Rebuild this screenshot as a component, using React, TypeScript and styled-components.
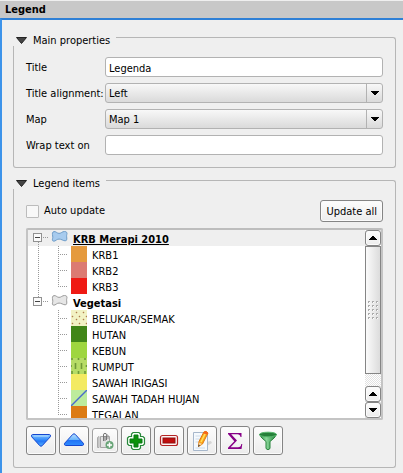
import React, { useState } from "react";
import styled, { createGlobalStyle, css } from "styled-components";

const GlobalStyle = createGlobalStyle`
  *, *::before, *::after { box-sizing: border-box; }
  body { margin: 0; background: #efefef; }
  body, button, input, select {
    font-family: "DejaVu Sans Condensed", "Noto Sans", sans-serif;
    font-size: 11px;
    line-height: 16px;
    color: #000;
  }
`;

const raised = css`
  border: 1px solid #858585;
  border-radius: 3px;
  background: linear-gradient(#fdfdfd, #ececec);
  box-shadow: inset 0 0 0 1px #fbfbfb;
`;

const Dock = styled.div`
  display: flex;
  flex-direction: column;
  min-height: 100vh;
  padding-top: 1px;
`;

const DockTitle = styled.h1`
  margin: 0;
  height: 17px;
  padding-left: 5px;
  background: #c8c8c8;
  font-size: 11px;
  line-height: 18px;
`;

const Panel = styled.main`
  flex: 1;
  display: flex;
  flex-direction: column;
  gap: 12px;
  padding: 17px 7px 5px 11px;
  border: solid #3c93ea;
  border-width: 2px 0 0 2px;
  border-top-color: #2f80d6;
`;

const GroupHeader = styled.div`
  display: flex;
  align-items: center;
  height: 9px;
`;

const GroupToggle = styled.button`
  display: flex;
  align-items: center;
  gap: 6px;
  padding: 0 6px 2px 3px;
  border: 0;
  background: none;
  white-space: nowrap;
`;

const GroupLine = styled.span`
  flex: 1;
  height: 9px;
  border: solid #b6b6b6;
  border-width: 1px 1px 0 0;
  border-top-right-radius: 3px;
`;

const GroupBody = styled.div`
  display: flex;
  flex-direction: column;
  gap: 6px;
  padding: 11px 12px 12px;
  border: solid #b6b6b6;
  border-width: 0 1px 1px;
  border-radius: 0 0 3px 3px;
`;

const Field = styled.div`
  display: grid;
  grid-template-columns: 79px 1fr;
  align-items: center;
`;

const FieldLabel = styled.label`
  padding-top: 2px;
  white-space: nowrap;
`;

const TextInput = styled.input`
  width: 100%;
  min-width: 0;
  height: 20px;
  padding: 2px 3px 0;
  border: 1px solid #b2b2b2;
  border-radius: 3px;
  background: #fff;
  outline: none;
`;

const SelectFrame = styled.div`
  display: grid;
  grid-template-columns: 1fr 16px;
  height: 20px;
  border: 1px solid #b2b2b2;
  border-radius: 3px;
  background: linear-gradient(#f8f8f8, #dadada);
`;

const SelectInput = styled.select`
  grid-area: 1 / 1 / 2 / 3;
  appearance: none;
  min-width: 0;
  padding: 1px 3px 0;
  border: 0;
  background: none;
  outline: none;
`;

const SelectArrow = styled.span`
  grid-area: 1 / 2 / 2 / 3;
  display: flex;
  align-items: center;
  justify-content: center;
  border-left: 1px solid #b2b2b2;
  pointer-events: none;
`;

const UpdateRow = styled.div`
  display: flex;
  align-items: center;
  justify-content: space-between;
`;

const CheckLabel = styled.label`
  display: flex;
  align-items: center;
  gap: 5px;
`;

const CheckBox = styled.input`
  appearance: none;
  width: 13px;
  height: 13px;
  margin: 0;
  border: 1px solid #bcbcbc;
  border-radius: 1px;
  background: #f8f8f8;
  &:checked { background: #555; box-shadow: inset 0 0 0 2px #f8f8f8; }
`;

const TextButton = styled.button`
  ${raised}
  height: 22px;
  padding: 1px 5px 0;
`;

const TreeFrame = styled.div`
  display: flex;
  height: 192px;
  border: 2px solid #c4c4c4;
  border-top-color: #bdbdbd;
  border-radius: 2px;
  background: #fff;
`;

const Tree = styled.ul`
  flex: 1;
  min-width: 0;
  margin: 0;
  padding: 0;
  overflow: hidden;
  list-style: none;
`;

const TreeRow = styled.li<{ $selected?: boolean; $layer?: boolean }>`
  display: flex;
  align-items: center;
  height: 16px;
  gap: 5px;
  background: ${(p) => (p.$selected ? "#efefef" : "transparent")};
  font-weight: ${(p) => (p.$layer ? 700 : 400)};
  text-decoration: ${(p) => (p.$selected ? "underline" : "none")};
  white-space: nowrap;
  svg { flex: none; display: block; }
`;

const RowLead = styled.span`
  display: flex;
  flex: none;
`;

const RowText = styled.span`
  padding-top: 3px;
`;

const ScrollBar = styled.div`
  display: flex;
  flex-direction: column;
  width: 16px;
  background: repeating-conic-gradient(#e2e2e2 0 25%, #fff 0 50%) 0 0 / 2px 2px;
`;

const ScrollButton = styled.button`
  ${raised}
  display: flex;
  align-items: center;
  justify-content: center;
  height: 16px;
  padding: 0;
`;

const ScrollThumb = styled.div`
  display: flex;
  align-items: center;
  justify-content: center;
  height: 128px;
  margin-bottom: auto;
  border: 1px solid #858585;
  background: linear-gradient(90deg, #fbfbfb, #dcdcdc);
`;

const ToolBar = styled.div`
  display: flex;
  align-items: center;
  gap: 3px;
`;

const ToolButton = styled.button<{ $small?: boolean }>`
  ${raised}
  display: flex;
  align-items: center;
  justify-content: center;
  width: ${(p) => (p.$small ? 26 : 30)}px;
  height: ${(p) => (p.$small ? 25 : 29)}px;
  padding: 0;
  border-color: ${(p) => (p.$small ? "#a2a2a2" : "#858585")};
`;

const Arrow = ({ up = false }: { up?: boolean }) => (
  <svg width="8" height="4" viewBox="0 0 8 4" aria-hidden="true">
    <path d={up ? "M0 4V3H1V2H2V1H3V0H5V1H6V2H7V3H8V4Z" : "M0 0H8V1H7V2H6V3H5V4H3V3H2V2H1V1H0Z"} />
  </svg>
);

const Grip = () => (
  <svg width="11" height="19" aria-hidden="true">
    {[0, 4, 8].map((x) =>
      [0, 4, 8, 12, 16].map((y) => (
        <g key={`${x}-${y}`}>
          <path d={`M${x} ${y}h2v1h-1v1h-1z`} fill="#ababab" />
          <path d={`M${x + 1} ${y + 1}h1v1h-1z`} fill="#fff" />
        </g>
      ))
    )}
  </svg>
);

const LayerGuide = ({ first }: { first?: boolean }) => (
  <svg width="23" height="16" aria-hidden="true">
    <path d={first ? "M10.5 12V16" : "M10.5 0V4"} stroke="#999" strokeDasharray="1 1" />
    <path d="M15 7.5H21" stroke="#999" strokeDasharray="1 1" />
    <rect x="5.5" y="3.5" width="8" height="8" fill="#fafafa" stroke="#919191" />
    <path d="M7 7.5H12" stroke="#444" />
  </svg>
);

const ItemGuide = ({ trunk, last }: { trunk?: boolean; last?: boolean }) => (
  <svg width="43" height="16" aria-hidden="true">
    {trunk && <path d="M10.5 0V16" stroke="#999" strokeDasharray="1 1" />}
    <path d={last ? "M30.5 0V8" : "M30.5 0V16"} stroke="#999" strokeDasharray="1 1" />
    <path d="M30 8.5H40" stroke="#999" strokeDasharray="1 1" />
  </svg>
);

const PolygonIcon = ({ blue }: { blue?: boolean }) => (
  <svg width="17" height="14" viewBox="0 0 17 14" aria-hidden="true">
    <path
      d="M3 1.6C4.8 1.2 5.8 3.2 8 3.4C10.2 3.4 11.2 1.5 13.5 1.5C15.6 1.5 16.4 2.6 15.8 4.6C15.3 6 15.9 7.6 15.8 9.2C15.7 11.4 13.2 11 11.2 9.9C9 8.8 7 8.8 5.4 10C3.6 11.6 1.4 11.6 1.4 9.8C1.4 8.6 2 8 1.7 6C1.3 4 1 2 3 1.6Z"
      fill={blue ? "#a7cbee" : "#e6e6e6"}
      stroke={blue ? "#6e9cc8" : "#9b9b9b"}
    />
  </svg>
);

type Pattern = "dots" | "grass" | "diagonal";

const Swatch = ({ color, pattern }: { color: string; pattern?: Pattern }) => (
  <svg width="16" height="16" viewBox="0 0 16 16" aria-hidden="true">
    <rect width="16" height="16" fill={color} />
    {pattern === "dots" && (
      <path
        d="M5 2h1v1h-1zM12 2h1v1h-1zM1 6h1v1h-1zM8 6h1v1h-1zM5 9h1v1h-1zM12 9h1v1h-1zM1 13h1v1h-1zM8 13h1v1h-1zM15 6h1v1h-1zM15 13h1v1h-1z"
        fill="#925f3d"
        stroke="#b98d5b"
        strokeWidth=".5"
      />
    )}
    {pattern === "grass" && (
      <path
        d="M4.5 5V11M10.5 5V11M1 0V2M7.5 0V2M14 0V2M1 13V16M7.5 13V16M14 13V16M0 7V9M15.5 7V9"
        stroke="#6f9a37"
        strokeWidth="1.6"
      />
    )}
    {pattern === "diagonal" && <path d="M0 16L16 0" stroke="#4a6ccb" strokeWidth="1.4" />}
  </svg>
);

const TriangleIcon = ({ up = false }: { up?: boolean }) => (
  <svg width="22" height="22" viewBox="0 0 22 22" aria-hidden="true">
    <defs>
      <linearGradient id={up ? "blueUp" : "blueDown"} x1="0" y1="0" x2="0" y2="1">
        <stop offset="0" stopColor={up ? "#b9e0ff" : "#82c4ff"} />
        <stop offset=".5" stopColor={up ? "#6cb6fb" : "#2b86fb"} />
        <stop offset=".55" stopColor="#2173f6" />
        <stop offset="1" stopColor={up ? "#2f8dff" : "#58b5ff"} />
      </linearGradient>
    </defs>
    <path
      d={up
        ? "M9.8 4.3Q11 3.2 12.2 4.3L20.3 13.2Q21.2 15.3 19.5 15.5H2.5Q.8 15.3 1.7 13.2Z"
        : "M2.5 4.5H19.5Q21.2 4.7 20.3 6.8L12.2 15.7Q11 16.8 9.8 15.7L1.7 6.8Q.8 4.7 2.5 4.5Z"}
      fill={`url(#${up ? "blueUp" : "blueDown"})`}
      stroke="#1446cf"
    />
    {!up && <path d="M3.5 6H18.5" stroke="#b9e0ff" />}
  </svg>
);

const AddGroupIcon = () => (
  <svg width="18" height="18" viewBox="0 0 18 18" aria-hidden="true">
    <path d="M1.5 5.5L3 4.5V15.5H1.5Z" fill="#ddd" stroke="#aaa" />
    <path d="M4.5 4.5H13.5V15.5H4.5Z" fill="#e2e2e2" stroke="#a5a5a5" />
    <path d="M7.5 9V3Q7.5 1.3 9 1.3T10.5 3V8M9 4V9" fill="none" stroke="#777" />
    <path d="M10 3H12V7" fill="none" stroke="#999" />
    <circle cx="13.5" cy="13" r="4" fill="#68a477" />
    <path d="M13.5 10.5V15.5M11 13H16" stroke="#fff" strokeWidth="1.5" />
  </svg>
);

const PlusIcon = () => (
  <svg width="20" height="20" viewBox="0 0 20 20" aria-hidden="true">
    <path
      d="M7 1.5H13L14.5 3V5.5H17L18.5 7V13L17 14.5H14.5V17L13 18.5H7L5.5 17V14.5H3L1.5 13V7L3 5.5H5.5V3Z"
      fill="#f4fff3"
      stroke="#27873a"
      strokeWidth="1.2"
    />
    <path d="M8 4H12V8H16V12H12V16H8V12H4V8H8Z" fill="#0b9209" stroke="#087716" />
  </svg>
);

const MinusIcon = () => (
  <svg width="20" height="20" viewBox="0 0 20 20" aria-hidden="true">
    <rect x="1.5" y="4.5" width="17" height="10" rx="2" fill="#fff3f3" stroke="#b32323" strokeWidth="1.2" />
    <rect x="4" y="7" width="12" height="5" fill="#c10c0c" stroke="#8d1111" />
  </svg>
);

const EditIcon = () => (
  <svg width="22" height="22" viewBox="0 0 22 22" aria-hidden="true">
    <path d="M11 19L21 13L20 11L15 12Z" fill="#d6d6d6" />
    <path d="M2.5 2.5H16.5V20.5H2.5Z" fill="#f5f9fd" stroke="#a7b7cb" />
    <path d="M4.5 6H10M4.5 9H9M4.5 12H8M4.5 18H14" stroke="#ccdae9" />
    <path d="M7.5 16.5L8 11.5L12.8 2Q15 .2 17 3L11.5 14Z" fill="#fba51c" stroke="#e37a0c" />
    <path d="M10 12L14.5 3" stroke="#ffe05a" strokeWidth="1.5" />
    <path d="M7.5 16.5L8 12.5L11 14Z" fill="#f1d2a0" />
    <path d="M7 17L7.7 14.5L9 15.5Z" fill="#333" />
    <path d="M13 2.2Q15 .2 17 3L16.3 4.4L12.2 3.5Z" fill="#f5641e" />
  </svg>
);

const SigmaIcon = () => (
  <svg width="20" height="20" viewBox="0 0 20 20" aria-hidden="true">
    <path
      d="M3 2H16.5V6H15.5Q15 3.2 12.5 3.2H6.2L12 9.6L5.6 16.2H13Q16 16.2 16.3 13H17.3L16.5 18H3V16.8L9.3 10.2L3 3Z"
      fill="#870087"
    />
  </svg>
);

const FilterIcon = () => (
  <svg width="20" height="20" viewBox="0 0 20 20" aria-hidden="true">
    <defs>
      <linearGradient id="funnel">
        <stop offset="0" stopColor="#2c9347" />
        <stop offset=".4" stopColor="#8bd79a" />
        <stop offset="1" stopColor="#1f8439" />
      </linearGradient>
    </defs>
    <path d="M1.5 3.5Q3 7 8 10.5V17.5Q10 20 12 17.5V10.5Q17 7 18.5 3.5Z" fill="url(#funnel)" stroke="#28833d" />
    <ellipse cx="10" cy="3.5" rx="8.5" ry="2.3" fill="#257f39" stroke="#55b66b" />
  </svg>
);

const Group = ({ title, children }: { title: string; children: React.ReactNode }) => {
  const [open, setOpen] = useState(true);
  return (
    <section>
      <GroupHeader>
        <GroupToggle aria-expanded={open} onClick={() => setOpen(!open)}>
          <svg width="11" height="7" viewBox="0 0 11 7" aria-hidden="true">
            <path d="M.5 .5H10.5L5.5 6.5Z" fill="#444" stroke="#222" />
          </svg>
          {title}
        </GroupToggle>
        <GroupLine />
      </GroupHeader>
      {open && <GroupBody>{children}</GroupBody>}
    </section>
  );
};

const SelectField = ({ id, label, value }: { id: string; label: string; value: string }) => (
  <Field>
    <FieldLabel htmlFor={id}>{label}</FieldLabel>
    <SelectFrame>
      <SelectInput id={id}>
        <option>{value}</option>
      </SelectInput>
      <SelectArrow><Arrow /></SelectArrow>
    </SelectFrame>
  </Field>
);

type Item = { name: string; color: string; pattern?: Pattern };

const layers: { name: string; blue?: boolean; items: Item[] }[] = [
  {
    name: "KRB Merapi 2010",
    blue: true,
    items: [
      { name: "KRB1", color: "#e59a3e" },
      { name: "KRB2", color: "#dc7a72" },
      { name: "KRB3", color: "#ef1a14" },
    ],
  },
  {
    name: "Vegetasi",
    items: [
      { name: "BELUKAR/SEMAK", color: "#f2f2c4", pattern: "dots" },
      { name: "HUTAN", color: "#418618" },
      { name: "KEBUN", color: "#9ed63f" },
      { name: "RUMPUT", color: "#b6dc66", pattern: "grass" },
      { name: "SAWAH IRIGASI", color: "#f3ea62" },
      { name: "SAWAH TADAH HUJAN", color: "#bdeb9c", pattern: "diagonal" },
      { name: "TEGALAN", color: "#dc7b14" },
    ],
  },
];

const tools = [
  { label: "Move down", icon: <TriangleIcon /> },
  { label: "Move up", icon: <TriangleIcon up /> },
  { label: "Add group", icon: <AddGroupIcon />, small: true },
  { label: "Add layer", icon: <PlusIcon /> },
  { label: "Remove item", icon: <MinusIcon /> },
  { label: "Edit item", icon: <EditIcon /> },
  { label: "Show feature count", icon: <SigmaIcon /> },
  { label: "Filter legend", icon: <FilterIcon /> },
];

export default function App() {
  return (
    <>
      <GlobalStyle />
      <Dock>
        <DockTitle>Legend</DockTitle>
        <Panel>
          <Group title="Main properties">
            <Field>
              <FieldLabel htmlFor="title">Title</FieldLabel>
              <TextInput id="title" type="text" defaultValue="Legenda" />
            </Field>
            <SelectField id="alignment" label="Title alignment:" value="Left" />
            <SelectField id="map" label="Map" value="Map 1" />
            <Field>
              <FieldLabel htmlFor="wrap">Wrap text on</FieldLabel>
              <TextInput id="wrap" type="text" />
            </Field>
          </Group>
          <Group title="Legend items">
            <UpdateRow>
              <CheckLabel>
                <CheckBox type="checkbox" />
                Auto update
              </CheckLabel>
              <TextButton>Update all</TextButton>
            </UpdateRow>
            <TreeFrame>
              <Tree>
                {layers.map((layer, i) => (
                  <React.Fragment key={layer.name}>
                    <TreeRow $layer $selected={i === 0}>
                      <RowLead>
                        <LayerGuide first={i === 0} />
                        <PolygonIcon blue={layer.blue} />
                      </RowLead>
                      <RowText>{layer.name}</RowText>
                    </TreeRow>
                    {layer.items.map((item, j) => (
                      <TreeRow key={item.name}>
                        <RowLead>
                          <ItemGuide trunk={i === 0} last={j === layer.items.length - 1} />
                          <Swatch color={item.color} pattern={item.pattern} />
                        </RowLead>
                        <RowText>{item.name}</RowText>
                      </TreeRow>
                    ))}
                  </React.Fragment>
                ))}
              </Tree>
              <ScrollBar>
                <ScrollButton aria-label="Scroll up"><Arrow up /></ScrollButton>
                <ScrollThumb><Grip /></ScrollThumb>
                <ScrollButton aria-label="Scroll up one line"><Arrow up /></ScrollButton>
                <ScrollButton aria-label="Scroll down"><Arrow /></ScrollButton>
              </ScrollBar>
            </TreeFrame>
            <ToolBar>
              {tools.map((tool) => (
                <ToolButton key={tool.label} aria-label={tool.label} $small={tool.small}>
                  {tool.icon}
                </ToolButton>
              ))}
            </ToolBar>
          </Group>
        </Panel>
      </Dock>
    </>
  );
}
